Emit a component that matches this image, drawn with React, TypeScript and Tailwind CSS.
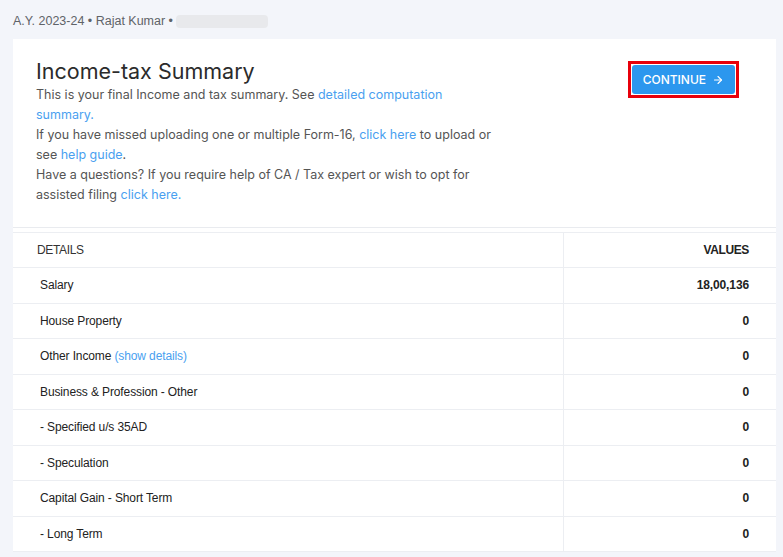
import { ArrowRight } from 'lucide-react';

interface Row {
  label: string;
  value: string;
  link?: string;
  bold?: boolean;
}

const rows: Row[] = [
  { label: 'Salary', value: '18,00,136', bold: true },
  { label: 'House Property', value: '0' },
  { label: 'Other Income', value: '0', link: '(show details)' },
  { label: 'Business & Profession - Other', value: '0' },
  { label: '- Specified u/s 35AD', value: '0' },
  { label: '- Speculation', value: '0' },
  { label: 'Capital Gain - Short Term', value: '0' },
  { label: '- Long Term', value: '0' },
];

const sans = "font-['Inter','Noto_Sans',sans-serif]";
const narrow = "font-['Liberation_Sans','Arial',sans-serif]";

export default function App() {
  return (
    <div className={`h-[557px] w-[783px] overflow-hidden bg-[#f3f5fa] ${sans}`}>
      {/* Breadcrumb */}
      <div className="flex h-[39px] items-center gap-[3px] pl-[13px] pt-[4px] text-[12px] text-[#5f6368]">
        <span className={narrow + ' text-[12.5px]'}>A.Y. 2023-24 • Rajat Kumar •</span>
        <span className="h-[13px] w-[92px] rounded-sm bg-[#e8e9ec]" />
      </div>

      <div className="ml-[13px] w-[763px] bg-white">
        {/* Intro */}
        <div className="flex justify-between border-b border-[#e9ebef] pb-[22px] pl-[23px] pr-[37px] pt-[18px]">
          <div className="w-[462px]">
            <h1 className="text-[21.5px] leading-[28px] text-[#2b2b2b]">Income-tax Summary</h1>
            <p className="text-[12.5px] leading-[20px] text-[#555]">
              This is your final Income and tax summary. See{' '}
              <a className="text-[#4a9ff0]">detailed computation summary.</a>
              <br />
              If you have missed uploading one or multiple Form-16,{' '}
              <a className="text-[#4a9ff0]">click here</a> to upload or see{' '}
              <a className="text-[#4a9ff0]">help guide</a>.
              <br />
              Have a questions? If you require help of CA / Tax expert or wish to opt for assisted
              filing <a className="text-[#4a9ff0]">click here.</a>
            </p>
          </div>
          <div className="mt-[4px] h-[37px] border-[3px] border-[#e8000b] p-[1px]">
            <button className="flex h-[29px] items-center gap-[6px] rounded-[3px] bg-[#2c97ee] px-[11px] text-[12px] font-medium text-white">
              CONTINUE
              <ArrowRight className="h-[12px] w-[12px]" strokeWidth={2.2} />
            </button>
          </div>
        </div>

        {/* Table */}
        <table className={`mt-[4px] w-full border-t border-[#eceef2] text-[12px] tracking-[-0.01em] text-[#222] ${narrow}`}>
          <thead>
            <tr className="h-[35px] border-b border-[#eceef2]">
              <th className="pl-[24px] text-left font-normal tracking-[-0.03em] text-[#333]">DETAILS</th>
              <th className="w-[213px] border-l border-[#eceef2] pr-[27px] text-right font-bold tracking-[-0.03em]">VALUES</th>
            </tr>
          </thead>
          <tbody>
            {rows.map((row) => (
              <tr key={row.label} className="h-[35.5px] border-b border-[#eceef2]">
                <td className="pl-[27px]">
                  {row.label}
                  {row.link && <span className="text-[#4a9ff0]"> {row.link}</span>}
                </td>
                <td className="border-l border-[#eceef2] pr-[27px] text-right font-bold">{row.value}</td>
              </tr>
            ))}
          </tbody>
        </table>
      </div>
    </div>
  );
}
